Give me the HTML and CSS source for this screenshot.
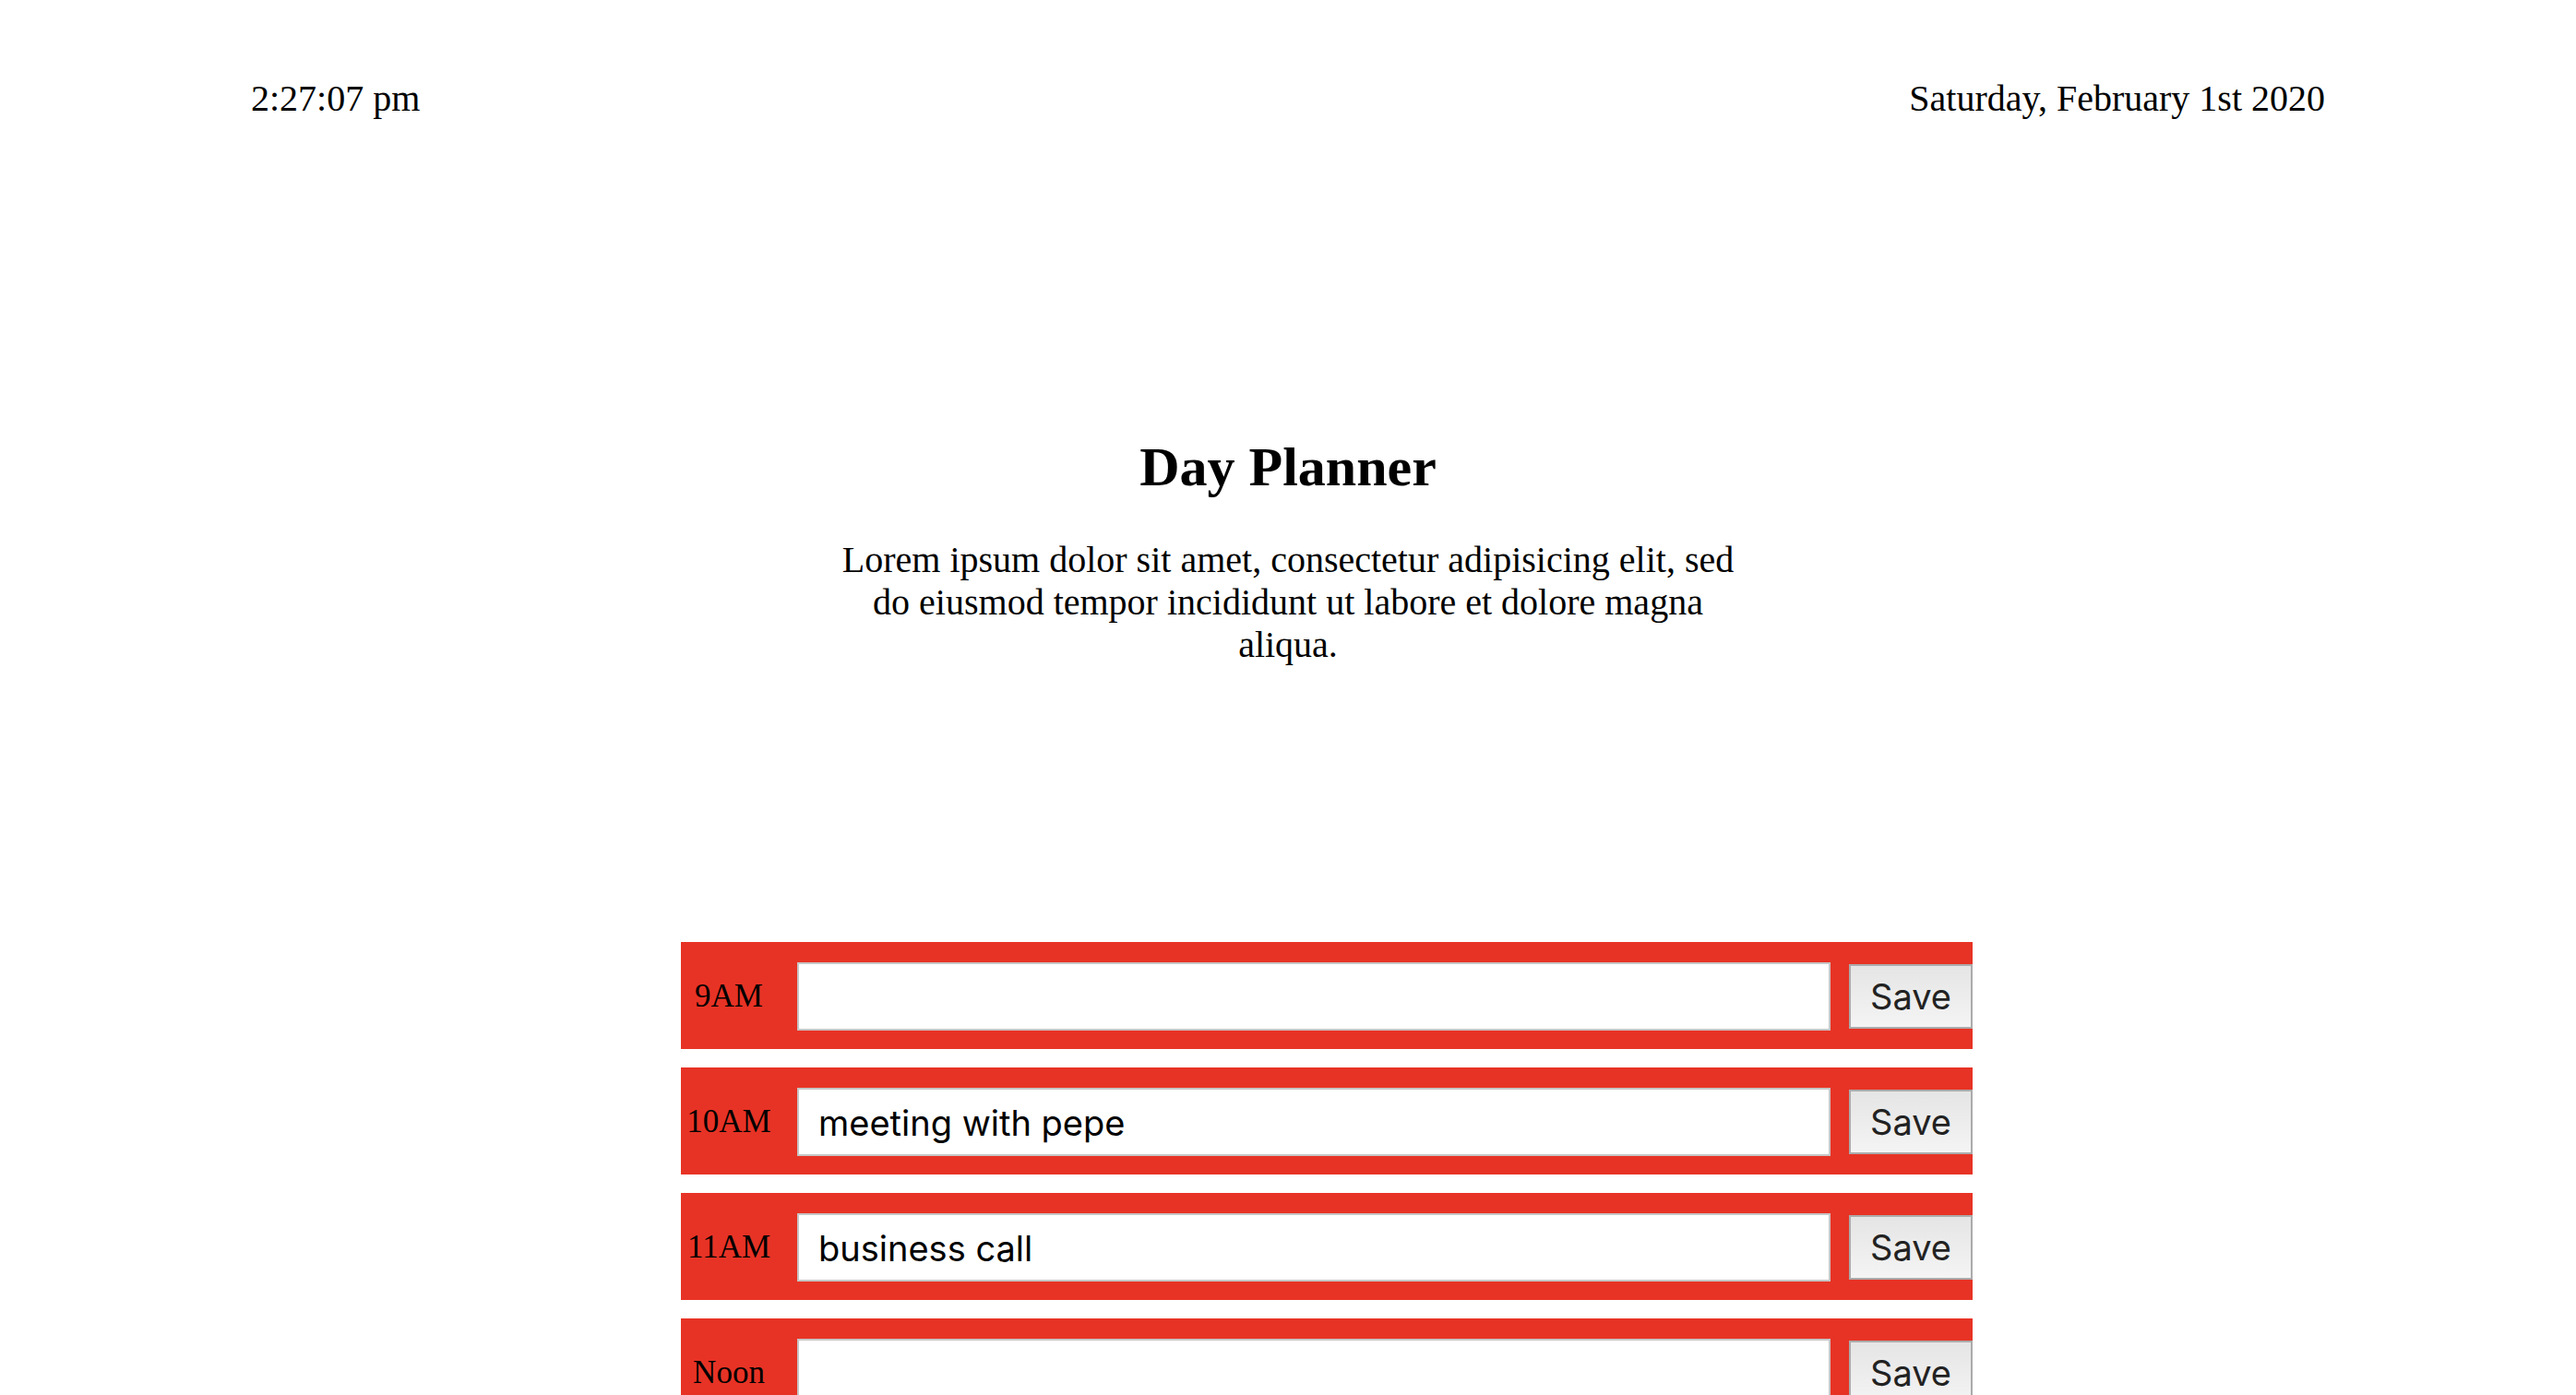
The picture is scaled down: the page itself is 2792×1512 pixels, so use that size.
FILE: index.html
```html
<!DOCTYPE html>
<html lang="en">
<head>
<meta charset="utf-8">
<title>Day Planner</title>
<link rel="stylesheet" href="styles.css">
</head>
<body>
  <header class="topbar">
    <p class="clock">2:27:07 pm</p>
    <p class="today">Saturday, February 1st 2020</p>
  </header>
  <section class="intro">
    <h1 class="title">Day Planner</h1>
    <p class="lead">Lorem ipsum dolor sit amet, consectetur adipisicing elit, sed do eiusmod tempor incididunt ut labore et dolore magna aliqua.</p>
  </section>
  <main class="planner">
    <div class="hour-row">
      <span class="hour">9AM</span>
      <input class="task" type="text" value="">
      <button class="save">Save</button>
    </div>
    <div class="hour-row">
      <span class="hour">10AM</span>
      <input class="task" type="text" value="meeting with pepe">
      <button class="save">Save</button>
    </div>
    <div class="hour-row">
      <span class="hour">11AM</span>
      <input class="task" type="text" value="business call">
      <button class="save">Save</button>
    </div>
    <div class="hour-row">
      <span class="hour">Noon</span>
      <input class="task" type="text" value="">
      <button class="save">Save</button>
    </div>
    <div class="hour-row">
      <span class="hour">1PM</span>
      <input class="task" type="text" value="">
      <button class="save">Save</button>
    </div>
    <div class="hour-row">
      <span class="hour">2PM</span>
      <input class="task" type="text" value="">
      <button class="save">Save</button>
    </div>
    <div class="hour-row">
      <span class="hour">3PM</span>
      <input class="task" type="text" value="">
      <button class="save">Save</button>
    </div>
    <div class="hour-row">
      <span class="hour">4PM</span>
      <input class="task" type="text" value="">
      <button class="save">Save</button>
    </div>
    <div class="hour-row">
      <span class="hour">5PM</span>
      <input class="task" type="text" value="">
      <button class="save">Save</button>
    </div>
  </main>
</body>
</html>
```

FILE: styles.css
```css
html, body {
  margin: 0;
  padding: 0;
  background: #ffffff;
  color: #000000;
  font-family: "Liberation Serif", "Times New Roman", serif;
}

.topbar {
  display: flex;
  justify-content: space-between;
  padding: 84px 272px 0 272px;
}

.clock,
.today {
  margin: 0;
  font-size: 40px;
  line-height: 46px;
}

.intro {
  display: flex;
  flex-direction: column;
  align-items: center;
  margin-top: 342px;
}

.title {
  margin: 0;
  font-size: 60px;
  line-height: 69px;
  font-weight: bold;
  text-align: center;
}

.lead {
  margin: 43px 0 0 0;
  width: 990px;
  font-size: 40px;
  line-height: 46px;
  text-align: center;
}

.planner {
  width: 1400px;
  margin: 299px 0 0 738px;
  display: flex;
  flex-direction: column;
  gap: 20px;
}

.hour-row {
  display: flex;
  align-items: center;
  box-sizing: border-box;
  height: 116px;
  padding: 2px 0 0 0;
  background: #e73325;
}

.hour {
  width: 104px;
  flex: none;
  text-align: center;
  font-size: 35px;
  color: #000;
}

.task {
  box-sizing: border-box;
  flex: none;
  width: 1120px;
  height: 74px;
  margin: 0 0 0 22px;
  padding: 2px 21px 0 21px;
  border: 2px solid #c6c6c6;
  background: #ffffff;
  font-family: "Inter", "Noto Sans", sans-serif;
  font-size: 38px;
  color: #000;
  outline: none;
}

.save {
  box-sizing: border-box;
  flex: none;
  width: 134px;
  height: 70px;
  margin: 0 0 0 20px;
  padding: 0;
  border: 2px solid #ababab;
  background: linear-gradient(#e5e5e5, #f4f4f4);
  font-family: "Inter", "Noto Sans", sans-serif;
  font-size: 38px;
  color: #222;
}
```
